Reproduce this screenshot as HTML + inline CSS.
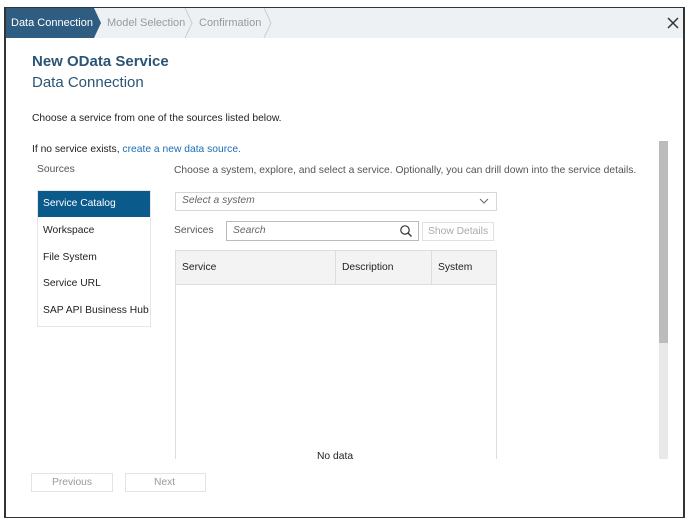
<!DOCTYPE html>
<html><head><meta charset="utf-8"><style>
*{box-sizing:border-box;margin:0;padding:0}
body{width:690px;height:525px;background:#fff;font-family:"Liberation Sans",sans-serif;position:relative;overflow:hidden;color:#222}
.frame{position:absolute;left:4px;top:7px;width:681px;height:511px;border:2px solid #333;border-top:1px solid #333;border-bottom:1px solid #333;overflow:hidden}
.hdr{position:absolute;left:0;top:0;width:100%;height:30px;background:#eef1f4}
.a{position:absolute;font-size:10.3px;white-space:nowrap}
.box{position:absolute;border:1px solid #d6d6d6;background:#fff}
</style></head><body>
<div class="frame">
<div class="hdr">
<svg width="300" height="30" style="position:absolute;left:0;top:0">
<polygon points="0,0 88,0 95,15 88,30 0,30" fill="#2f5d82"/>
<polyline points="179,0 186,15 179,30" fill="none" stroke="#c9ced3"/>
<polyline points="258,0 265,15 258,30" fill="none" stroke="#c9ced3"/>
</svg>
<div class="a" style="left:5px;top:9px;font-size:11px;color:#fff">Data Connection</div>
<div class="a" style="left:101px;top:9px;font-size:11px;color:#999">Model Selection</div>
<div class="a" style="left:193px;top:9px;font-size:11px;color:#999">Confirmation</div>
<svg style="position:absolute;left:661px;top:9px" width="12" height="12"><path d="M1,1 L11,11 M11,1 L1,11" stroke="#333" stroke-width="1.5"/></svg>
</div>
<div class="a" style="left:26px;top:45px;font-size:15px;font-weight:bold;color:#2b5576">New OData Service</div>
<div class="a" style="left:26px;top:66px;font-size:15px;color:#2b5576">Data Connection</div>
<div class="a" style="left:26px;top:105px">Choose a service from one of the sources listed below.</div>
<div class="a" style="left:26px;top:136px">If no service exists, <span style="color:#1a6db5">create a new data source.</span></div>
<div class="a" style="left:31px;top:156px;color:#555">Sources</div>
<div class="a" style="left:168px;top:157px;color:#555">Choose a system, explore, and select a service. Optionally, you can drill down into the service details.</div>
<div class="box" style="left:31px;top:182px;width:114px;height:137px;border-color:#e6e6e6"></div>
<div class="a" style="left:32px;top:183px;width:112px;height:26px;background:#0a5a8c"></div>
<div class="a" style="left:37px;top:190px;color:#fff">Service Catalog</div>
<div class="a" style="left:37px;top:217px">Workspace</div>
<div class="a" style="left:37px;top:244px">File System</div>
<div class="a" style="left:37px;top:270px">Service URL</div>
<div class="a" style="left:37px;top:297px">SAP API Business Hub</div>
<div class="box" style="left:169px;top:184px;width:322px;height:19px"></div>
<div class="a" style="left:176px;top:187px;font-style:italic;color:#666">Select a system</div>
<svg style="position:absolute;left:473px;top:190px" width="10" height="7"><polyline points="1,1 5,5 9,1" fill="none" stroke="#666"/></svg>
<div class="a" style="left:168px;top:217px;color:#555">Services</div>
<div class="box" style="left:220px;top:213px;width:193px;height:20px;border-color:#bbb"></div>
<div class="a" style="left:227px;top:217px;font-style:italic;color:#666">Search</div>
<svg style="position:absolute;left:393px;top:216px" width="14" height="14"><circle cx="6" cy="6" r="4.2" fill="none" stroke="#333" stroke-width="1.2"/><line x1="9" y1="9" x2="12.5" y2="12.5" stroke="#333" stroke-width="1.3"/></svg>
<div class="box" style="left:416px;top:214px;width:72px;height:19px;border-color:#e0e0e0"></div>
<div class="a" style="left:422px;top:218px;color:#aaa">Show Details</div>
<div class="box" style="left:169px;top:242px;width:322px;height:240px;border-color:#ddd"></div>
<div class="a" style="left:170px;top:243px;width:320px;height:34px;background:#f3f3f3;border-bottom:1px solid #ddd"></div>
<div class="a" style="left:329px;top:243px;width:1px;height:34px;background:#ddd"></div>
<div class="a" style="left:425px;top:243px;width:1px;height:34px;background:#ddd"></div>
<div class="a" style="left:176px;top:254px">Service</div>
<div class="a" style="left:336px;top:254px">Description</div>
<div class="a" style="left:432px;top:254px">System</div>
<div class="a" style="left:311px;top:443px">No data</div>
<div class="a" style="left:0;top:451px;width:681px;height:60px;background:#fff"></div>
<div class="a" style="left:653px;top:133px;width:9px;height:318px;background:#e8e8e8"></div>
<div class="a" style="left:653px;top:133px;width:9px;height:202px;background:#bcbcbc"></div>
<div class="box" style="left:25px;top:465px;width:82px;height:19px;border-color:#e3e3e3"></div>
<div class="a" style="left:46px;top:469px;color:#999">Previous</div>
<div class="box" style="left:119px;top:465px;width:81px;height:19px;border-color:#e3e3e3"></div>
<div class="a" style="left:148px;top:469px;color:#999">Next</div>
</div>
</body></html>
